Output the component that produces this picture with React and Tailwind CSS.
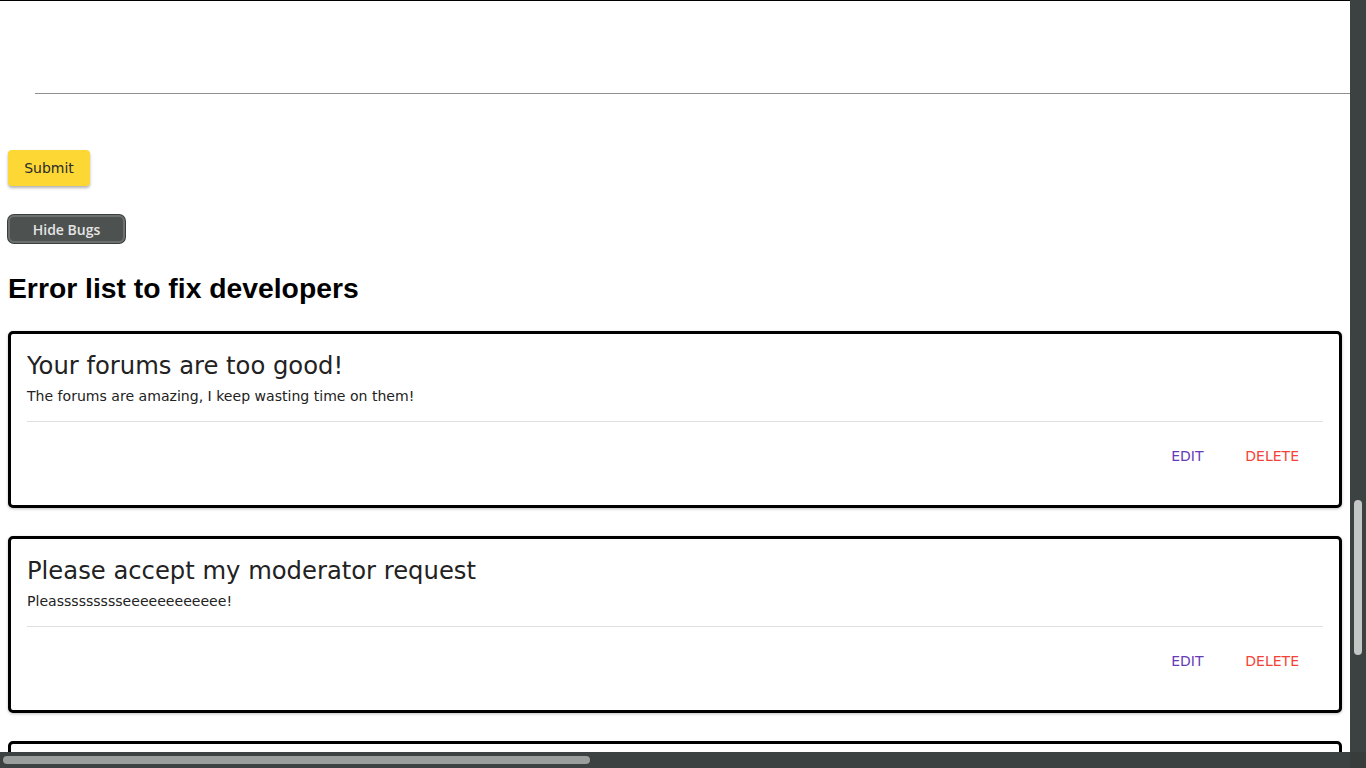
const bugs = [
  {
    id: 1,
    title: "Your forums are too good!",
    body: "The forums are amazing, I keep wasting time on them!",
  },
  {
    id: 2,
    title: "Please accept my moderator request",
    body: "Pleassssssssseeeeeeeeeeee!",
  },
];

function BugCard({ bug }) {
  return (
    <div className="mx-[8px] mb-[28px] h-[177px] shrink-0 rounded-[5px] border-[3px] border-black bg-white shadow-[0_1px_3px_rgba(0,0,0,0.25)]">
      <div className="px-[16px] pt-[16px]">
        <h5 className="text-[24.25px] leading-[32px] text-[#222]">{bug.title}</h5>
        <p className="mt-[4px] text-[14.07px] leading-[20px] text-[#222]">{bug.body}</p>
      </div>
      <div className="mx-[16px] mt-[15px] h-px bg-[#e0e0e0]" />
      <div className="mt-[16px] flex h-[36px] items-center justify-end gap-[18px] pr-[32px]">
        <button className="h-[36px] min-w-[64px] px-2 text-[14px] text-[#673ab7]">EDIT</button>
        <button className="h-[36px] min-w-[64px] px-2 text-[14px] text-[#f44336]">DELETE</button>
      </div>
    </div>
  );
}

export default function App() {
  return (
    <div className="flex h-[768px] w-[1366px] flex-col overflow-hidden bg-white font-['DejaVu_Sans',sans-serif]">
      <div className="flex h-[752px] shrink-0">
        {/* Page */}
        <div className="flex flex-1 flex-col overflow-hidden border-t border-black">
          <div className="ml-[35px] mt-[92px] h-px shrink-0 bg-[#8f8f8f]" />

          <div className="ml-[8px] mt-[56px] shrink-0">
            <button className="h-[36px] w-[82px] rounded-[4px] bg-[#fdd835] text-[14px] text-[#2a2a2a] shadow-[0_2px_3px_rgba(0,0,0,0.3)]">
              Submit
            </button>
          </div>

          <div className="ml-[8px] mt-[29px] shrink-0">
            <button className="h-[28px] w-[117px] rounded-[6px] border-2 border-[#6c706e] bg-[#4d5250] font-['Open_Sans',sans-serif] text-[14px] font-semibold text-[#e4e4e4] ring-1 ring-[#3a3e3c]">
              Hide Bugs
            </button>
          </div>

          <h2 className="ml-[8px] mt-[29px] shrink-0 font-['Liberation_Sans',Arial,sans-serif] text-[28.3px] font-bold leading-[32px] text-black">
            Error list to fix developers
          </h2>

          <div className="mt-[27px] flex flex-col">
            {bugs.map((bug) => (
              <BugCard key={bug.id} bug={bug} />
            ))}
            {/* next card, cut off by the viewport */}
            <div className="mx-[8px] h-[177px] shrink-0 rounded-[5px] border-[3px] border-black bg-white" />
          </div>
        </div>

        {/* Vertical scrollbar */}
        <div className="flex w-[16px] shrink-0 justify-center bg-[#3c4241] pt-[500px]">
          <div className="h-[155px] w-[8px] rounded-full bg-[#c3c6c4]" />
        </div>
      </div>

      {/* Horizontal scrollbar */}
      <div className="flex h-[16px] shrink-0">
        <div className="flex flex-1 items-center bg-[#3c4241] pl-[3px]">
          <div className="h-[8px] w-[587px] rounded-full bg-[#9a9e9c]" />
        </div>
        <div className="w-[16px] bg-[#383d3c]" />
      </div>
    </div>
  );
}
